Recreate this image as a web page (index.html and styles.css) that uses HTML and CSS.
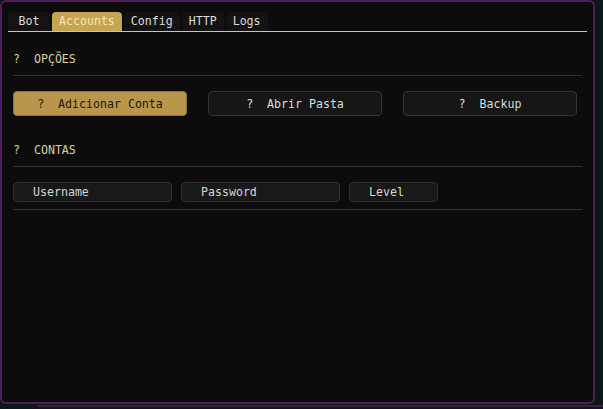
FILE: index.html
```html
<!DOCTYPE html>
<html>
<head>
  <title>Accounts</title>
  <link rel="stylesheet" href="styles.css">
</head>
<body>
  <div class="window">
    <div class="tabbar">
      <div class="tab first">Bot</div>
      <div class="tab active">Accounts</div>
      <div class="tab">Config</div>
      <div class="tab">HTTP</div>
      <div class="tab">Logs</div>
    </div>

    <div class="tab-body">
      <div class="section-title">?  OPÇÕES</div>
      <div class="sep"></div>

      <div class="actions">
        <button class="btn primary">?  Adicionar Conta</button>
        <button class="btn">?  Abrir Pasta</button>
        <button class="btn">?  Backup</button>
      </div>

      <div class="section-title second">?  CONTAS</div>
      <div class="sep"></div>

      <div class="fields">
        <input class="field wide" type="text" placeholder="Username">
        <input class="field wide" type="text" placeholder="Password">
        <input class="field short" type="text" placeholder="Level">
      </div>
      <div class="sep last"></div>
    </div>
  </div>
  <div class="behind"></div>
</body>
</html>
```

FILE: styles.css
```css
html, body { margin: 0; padding: 0; }
body { background: #0d1719; width: 603px; height: 409px; overflow: hidden; font-family: "DejaVu Sans Mono", monospace; font-size: 11.6px; color: #dcdcdc; }

.window { box-sizing: border-box; width: 595px; height: 404px; border: 2px solid #4f1f5b; border-radius: 6px; background: #0c0c0c; padding: 10px 6px 0 6px; }

.tabbar { display: flex; gap: 2px; height: 19px; border-bottom: 1px solid #d4c794; }
.tab { padding: 0 7px; line-height: 19px; text-align: center; background: #131313; border-radius: 4px 4px 0 0; white-space: pre; }
.tab.first { box-sizing: border-box; width: 42px; padding: 0; }
.tab.active { background: #c6a54e; color: #f3e6bd; }

.tab-body { padding: 0 5px; }

.section-title { margin-top: 20px; line-height: 14px; white-space: pre; color: #dccf9a; }
.section-title.second { margin-top: 27px; }
.sep { height: 1px; background: #35312a; margin-top: 9px; }
.sep.last { margin-top: 7px; }

.actions { display: flex; gap: 21px; margin-top: 15px; }
.btn { box-sizing: border-box; width: 174px; height: 25px; border: 1px solid #343434; border-radius: 4px; background: #161616; color: #dcdcdc; font-family: inherit; font-size: inherit; white-space: pre; padding: 0; }
.btn.primary { background: #b8974c; border-color: #8f7539; color: #1b1709; }

.fields { display: flex; gap: 9px; margin-top: 15px; }
.field { box-sizing: border-box; height: 20px; border: 1px solid #2f2f2f; border-radius: 4px; background: #191919; color: #d8d8d8; font-family: inherit; font-size: inherit; padding: 0 0 0 19px; outline: none; }
.field::placeholder { color: #d6d6d6; }
.field.wide { width: 159px; }
.field.short { width: 89px; }

.behind { margin: 1px 0 0 38px; height: 2px; background: #3e1c47; }
```
